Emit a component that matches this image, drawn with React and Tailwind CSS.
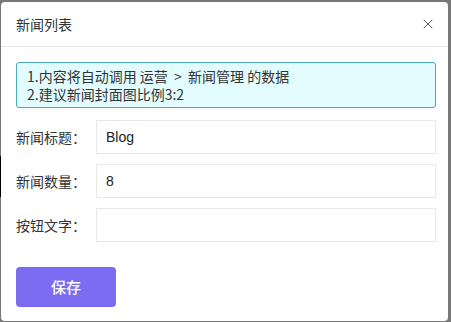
import { X } from "lucide-react";

const Field = ({ label, value }) => (
  <div className="flex items-center mt-[10px] first:mt-0">
    <label className="w-[80px] shrink-0 text-[14px] text-[#333]">{label}</label>
    <input
      defaultValue={value}
      className="flex-1 h-[34px] border border-[#e8e8e8] px-[9px] text-[14px] text-[#222] outline-none font-['Liberation_Sans','Noto_Sans_CJK_SC',sans-serif]"
    />
  </div>
);

const App = () => {
  return (
    <div className="w-[451px] h-[322px] bg-[#787878] flex overflow-hidden font-['Noto_Sans_CJK_SC',sans-serif]">
      <div className="w-[1px] flex flex-col">
        <div className="h-[156px]" />
        <div className="h-[41px] bg-black" />
      </div>
      <div className="w-[447px] mt-[2px] h-[319px] bg-white rounded-[4px] flex flex-col">
        <div className="h-[45px] pl-[15px] pr-[12px] flex items-center justify-between border-b border-[#e5e5e5]">
          <span className="text-[14px] text-[#333]">新闻列表</span>
          <X className="w-[16px] h-[16px] text-[#666]" strokeWidth={1.5} />
        </div>
        <div className="pl-[15px] pr-[12px] pt-[15px]">
          <div className="border border-[#4aaab8] bg-[#e3fcff] rounded-[3px] pl-[10px] pt-[4px] pb-[4px] text-[14px] leading-[18px] text-[#333]">
            <div>1.内容将自动调用 运营&nbsp; &gt; &nbsp;新闻管理 的数据</div>
            <div>2.建议新闻封面图比例3:2</div>
          </div>
          <div className="mt-[12px]">
            <Field label="新闻标题：" value="Blog" />
            <Field label="新闻数量：" value="8" />
            <Field label="按钮文字：" value="" />
          </div>
          <button className="mt-[25px] w-[100px] h-[40px] rounded-[4px] bg-[#7b6cf2] text-white text-[15px] font-medium">
            保存
          </button>
        </div>
      </div>
    </div>
  );
};

export default App;
